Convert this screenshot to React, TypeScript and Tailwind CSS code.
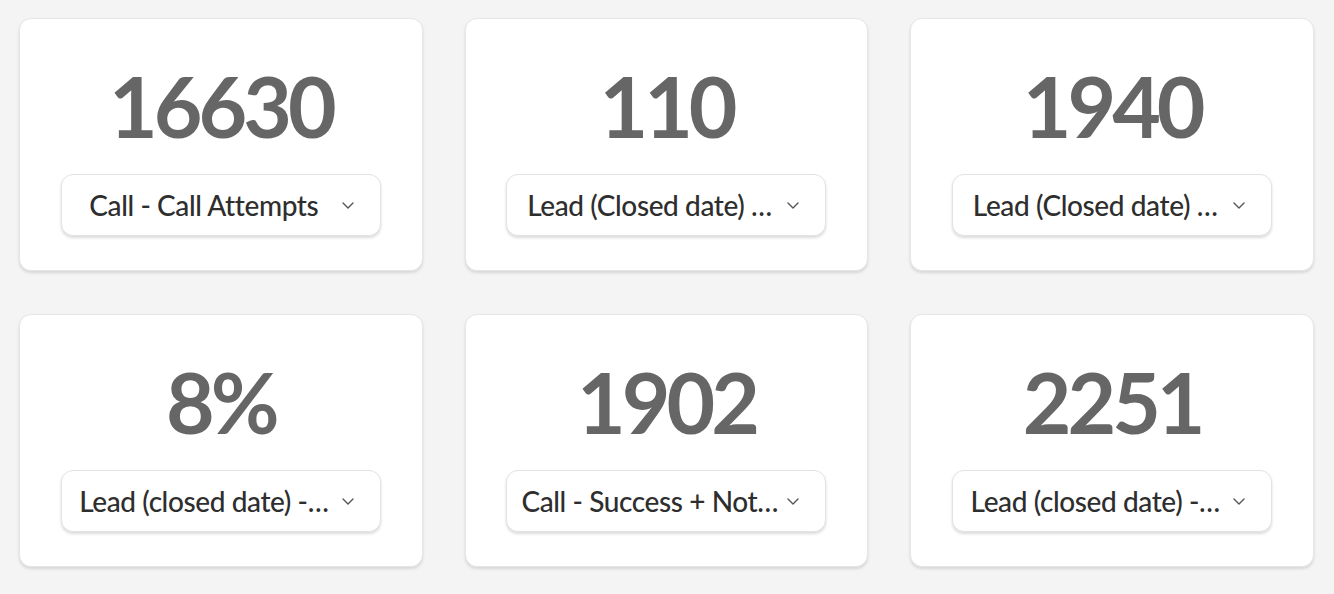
import React from 'react';

interface Stat {
  value: string;
  label: string;
}

// labels are shown as the app clips them
const stats: Stat[] = [
  { value: '16630', label: 'Call - Call Attempts' },
  { value: '110', label: 'Lead (Closed date) …' },
  { value: '1940', label: 'Lead (Closed date) …' },
  { value: '8%', label: 'Lead (closed date) -…' },
  { value: '1902', label: 'Call - Success + Not…' },
  { value: '2251', label: 'Lead (closed date) -…' },
];

const Chevron = () => (
  <svg width="12" height="7" viewBox="0 0 12 7" fill="none" className="shrink-0">
    <path d="M1 1l5 5 5-5" stroke="#555" strokeWidth="1.4" strokeLinecap="round" strokeLinejoin="round" />
  </svg>
);

const StatCard: React.FC<{ stat: Stat }> = ({ stat }) => (
  <div className="h-[253px] bg-white rounded-[12px] border border-[#e6e6e6] shadow-[0_2px_3px_rgba(0,0,0,0.12)] flex flex-col items-center pt-[45px]">
    <div className="text-[84px] leading-[84px] font-bold text-[#666666] tracking-[-4px]">{stat.value}</div>
    <button className="mt-[26px] w-[320px] h-[62px] bg-white rounded-[12px] border border-[#e3e3e3] shadow-[0_2px_3px_rgba(0,0,0,0.14)] flex items-center pl-[14px] pr-[26px] gap-[10px]">
      <span className="flex-1 min-w-0 whitespace-nowrap text-center text-[28px] leading-[34px] font-medium tracking-[-0.4px] text-[#2e2e2e]">{stat.label}</span>
      <Chevron />
    </button>
  </div>
);

export default function App() {
  return (
    <div className="min-h-[594px] bg-[#f4f4f4] pt-[18px] pl-[19px] pr-[20px]" style={{ fontFamily: 'Lato, "Open Sans", sans-serif' }}>
      <div className="grid grid-cols-3 gap-x-[42px] gap-y-[43px]">
        {stats.map((s, i) => (
          <StatCard key={i} stat={s} />
        ))}
      </div>
    </div>
  );
}
